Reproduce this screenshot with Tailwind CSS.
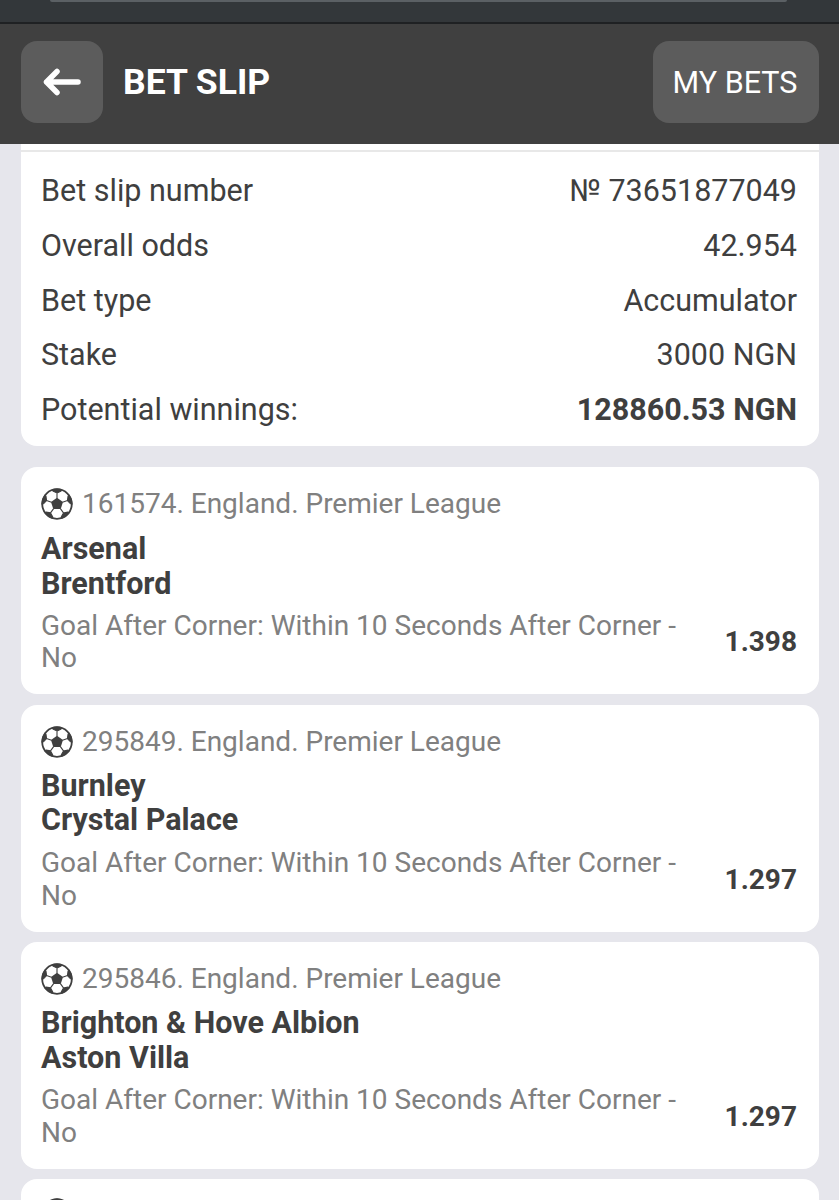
<!DOCTYPE html>
<html lang="en">
  <head>
    <meta charset="UTF-8" />
    <meta name="viewport" content="width=device-width, initial-scale=1" />
    <title>Bet Slip</title>
    <script src="https://cdn.jsdelivr.net/npm/@tailwindcss/browser@4"></script>
  </head>
  <body class="h-[1200px] overflow-hidden bg-[#e6e6ec] font-['Roboto',sans-serif] text-[#3f3f3f]">
    <svg width="0" height="0" class="absolute">
      <symbol id="ball" viewBox="0 0 32 32">
        <circle cx="16" cy="16" r="14.800" fill="white" stroke="#3f3f3f" stroke-width="1.800" />
        <path fill="#3f3f3f" d="M16 9.700 22 14 19.700 21H12.300L10 14Z" />
        <g fill="#3f3f3f" stroke="#3f3f3f" stroke-width="1.100">
          <path d="M16 5 20 3.100 20.600 1.700A15 15 0 0 0 11.400 1.700L12 3.100Z M16 5V10.200" />
          <path transform="rotate(72 16 16)" d="M16 5 20 3.100 20.600 1.700A15 15 0 0 0 11.400 1.700L12 3.100Z M16 5V10.200" />
          <path transform="rotate(144 16 16)" d="M16 5 20 3.100 20.600 1.700A15 15 0 0 0 11.400 1.700L12 3.100Z M16 5V10.200" />
          <path transform="rotate(216 16 16)" d="M16 5 20 3.100 20.600 1.700A15 15 0 0 0 11.400 1.700L12 3.100Z M16 5V10.200" />
          <path transform="rotate(288 16 16)" d="M16 5 20 3.100 20.600 1.700A15 15 0 0 0 11.400 1.700L12 3.100Z M16 5V10.200" />
        </g>
      </symbol>
    </svg>

    <!-- status bar -->
    <div class="h-[24px] bg-[#33373a] border-b-2 border-[#1f2123]">
      <div class="h-[2px] ml-[50px] mr-[52px] bg-[#5b6064] rounded-b"></div>
    </div>

    <!-- header -->
    <header class="h-[120px] bg-[#404040] flex items-center justify-between pl-[21px] pr-[20px] pb-[5px]">
      <div class="flex items-center gap-[20px]">
        <button class="w-[82px] h-[82px] rounded-[16px] bg-[#5c5c5c] flex items-center justify-center">
          <svg width="38" height="28" viewBox="0 0 38 28" fill="none" stroke="white" stroke-width="5.500" stroke-linecap="round" stroke-linejoin="round">
            <path d="M3.500 14H35M14 3.500 3.500 14 14 24.500" />
          </svg>
        </button>
        <h1 class="mt-[2px] text-[35.500px] font-bold text-white leading-none">BET SLIP</h1>
      </div>
      <button class="w-[166px] h-[82px] pt-[4px] pr-[2px] rounded-[16px] bg-[#5c5c5c] text-white text-[30.500px] leading-none">MY BETS</button>
    </header>

    <main class="pl-[21px] pr-[20px]">
      <!-- summary -->
      <section class="bg-white rounded-b-[16px] relative h-[302px] pt-[20px] pl-[20px] pr-[22px] text-[30.500px]">
        <div class="absolute left-0 right-0 top-[6px] h-[2px] bg-[#e8e8e8]"></div>
        <dl class="flex flex-col">
          <div class="flex justify-between h-[54.600px] items-center"><dt>Bet slip number</dt><dd>№ 73651877049</dd></div>
          <div class="flex justify-between h-[54.600px] items-center"><dt>Overall odds</dt><dd>42.954</dd></div>
          <div class="flex justify-between h-[54.600px] items-center"><dt>Bet type</dt><dd>Accumulator</dd></div>
          <div class="flex justify-between h-[54.600px] items-center"><dt>Stake</dt><dd>3000 NGN</dd></div>
          <div class="flex justify-between h-[54.600px] items-center"><dt>Potential winnings:</dt><dd class="font-bold">128860.53 NGN</dd></div>
        </dl>
      </section>

      <div class="mt-[21px] flex flex-col gap-[10.500px]">
        <article class="bg-white rounded-[16px] h-[227px] pt-[20px] pl-[20px] pr-[22px]">
          <div class="flex items-center gap-[9px] h-[34px] text-[28px] text-[#808080]">
            <svg width="32" height="32"><use href="#ball" /></svg>
            <span>161574. England. Premier League</span>
          </div>
          <div class="mt-[11px] text-[30.500px] font-bold leading-[34.500px]">Arsenal<br />Brentford</div>
          <div class="mt-[8.500px] flex items-center justify-between">
            <p class="w-[650px] text-[28px] leading-[32.500px] text-[#808080]">Goal After Corner: Within 10 Seconds After Corner - No</p>
            <span class="text-[28px] font-bold">1.398</span>
          </div>
        </article>

        <article class="bg-white rounded-[16px] h-[227px] pt-[20px] pl-[20px] pr-[22px]">
          <div class="flex items-center gap-[9px] h-[34px] text-[28px] text-[#808080]">
            <svg width="32" height="32"><use href="#ball" /></svg>
            <span>295849. England. Premier League</span>
          </div>
          <div class="mt-[10px] text-[30.500px] font-bold leading-[34.500px]">Burnley<br />Crystal Palace</div>
          <div class="mt-[9.500px] flex items-center justify-between">
            <p class="w-[650px] text-[28px] leading-[32.500px] text-[#808080]">Goal After Corner: Within 10 Seconds After Corner - No</p>
            <span class="text-[28px] font-bold">1.297</span>
          </div>
        </article>

        <article class="bg-white rounded-[16px] h-[227px] pt-[20px] pl-[20px] pr-[22px]">
          <div class="flex items-center gap-[9px] h-[34px] text-[28px] text-[#808080]">
            <svg width="32" height="32"><use href="#ball" /></svg>
            <span>295846. England. Premier League</span>
          </div>
          <div class="mt-[10px] text-[30.500px] font-bold leading-[34.500px]">Brighton &amp; Hove Albion<br />Aston Villa</div>
          <div class="mt-[9px] flex items-center justify-between">
            <p class="w-[650px] text-[28px] leading-[32.500px] text-[#808080]">Goal After Corner: Within 10 Seconds After Corner - No</p>
            <span class="text-[28px] font-bold">1.297</span>
          </div>
        </article>

        <article class="-mt-[1px] bg-white rounded-[16px] h-[227px] pt-[18px] pl-[20px] pr-[22px]">
          <div class="flex items-center gap-[9px] h-[34px]">
            <svg width="32" height="32"><use href="#ball" /></svg>
          </div>
        </article>
      </div>
    </main>
  </body>
</html>
